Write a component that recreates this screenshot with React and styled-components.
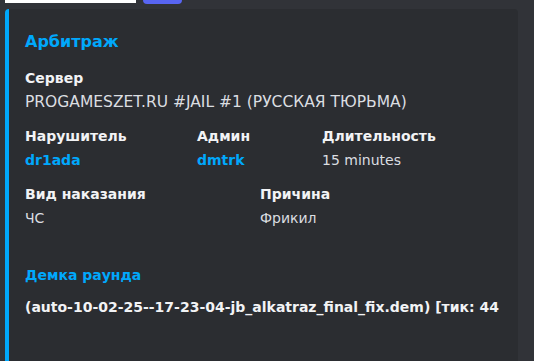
import React from 'react';
import styled, { createGlobalStyle } from 'styled-components';

const GlobalStyle = createGlobalStyle`
  html, body {
    margin: 0;
    padding: 0;
    background: #313338;
    overflow: hidden;
  }
  body {
    font-family: 'DejaVu Sans', 'Noto Sans', sans-serif;
  }
`;

const Page = styled.div`
  width: 534px;
  height: 361px;
  background: #313338;
  overflow: hidden;
`;

const TopStrip = styled.div`
  display: flex;
  gap: 7px;
  padding-left: 5px;
  height: 4px;
  align-items: flex-start;
`;

const InputStub = styled.div`
  width: 131px;
  height: 3px;
  background: #ffffff;
`;

const ButtonStub = styled.div`
  width: 39px;
  height: 4px;
  background: #5865f2;
  border-radius: 0 0 4px 4px;
`;

const Embed = styled.div`
  margin: 5px 0 0 5px;
  width: 513px;
  box-sizing: border-box;
  min-height: 400px;
  background: #2b2d31;
  border-left: 4px solid #00a8fc;
  border-radius: 4px;
  padding: 22px 16px 16px 16px;
`;

const Title = styled.div`
  font-size: 16px;
  font-weight: 700;
  line-height: 22px;
  color: #00a8fc;
  margin-bottom: 14px;
`;

const Fields = styled.div`
  display: flex;
  flex-direction: column;
  gap: 12px;
`;

const Row = styled.div`
  display: grid;
  grid-template-columns: ${(p) => p.cols || '1fr'};
`;

const Field = styled.div`
  display: flex;
  flex-direction: column;
  gap: 2px;
`;

const Name = styled.div`
  font-size: 14px;
  font-weight: 700;
  line-height: 22px;
  color: ${(p) => (p.accent ? '#00a8fc' : '#f2f3f5')};
`;

const Value = styled.div`
  font-size: ${(p) => p.size || 14}px;
  line-height: 22px;
  font-weight: ${(p) => (p.bold ? 700 : 400)};
  color: ${(p) => (p.link ? '#00a8fc' : p.bold ? '#f2f3f5' : '#dbdee1')};
  margin-top: ${(p) => p.offset || 0}px;
  white-space: nowrap;
`;

const Spacer = styled.div`
  height: ${(p) => p.h}px;
`;

export default function App() {
  return (
    <Page>
      <GlobalStyle />
      <TopStrip>
        <InputStub />
        <ButtonStub />
      </TopStrip>
      <Embed>
        <Title>Арбитраж</Title>
        <Fields>
          <Row>
            <Field>
              <Name>Сервер</Name>
              <Value size={15.5}>PROGAMESZET.RU #JAIL #1 (РУССКАЯ ТЮРЬМА)</Value>
            </Field>
          </Row>
          <Row cols="172px 125px 1fr">
            <Field>
              <Name>Нарушитель</Name>
              <Value link bold>dr1ada</Value>
            </Field>
            <Field>
              <Name>Админ</Name>
              <Value link bold>dmtrk</Value>
            </Field>
            <Field>
              <Name>Длительность</Name>
              <Value>15 minutes</Value>
            </Field>
          </Row>
          <Row cols="235px 1fr">
            <Field>
              <Name>Вид наказания</Name>
              <Value>ЧС</Value>
            </Field>
            <Field>
              <Name>Причина</Name>
              <Value>Фрикил</Value>
            </Field>
          </Row>
          <Spacer h={11} />
          <Row>
            <Field>
              <Name accent>Демка раунда</Name>
              <Value bold offset={8}>(auto-10-02-25--17-23-04-jb_alkatraz_final_fix.dem) [тик: 44</Value>
            </Field>
          </Row>
        </Fields>
      </Embed>
    </Page>
  );
}
